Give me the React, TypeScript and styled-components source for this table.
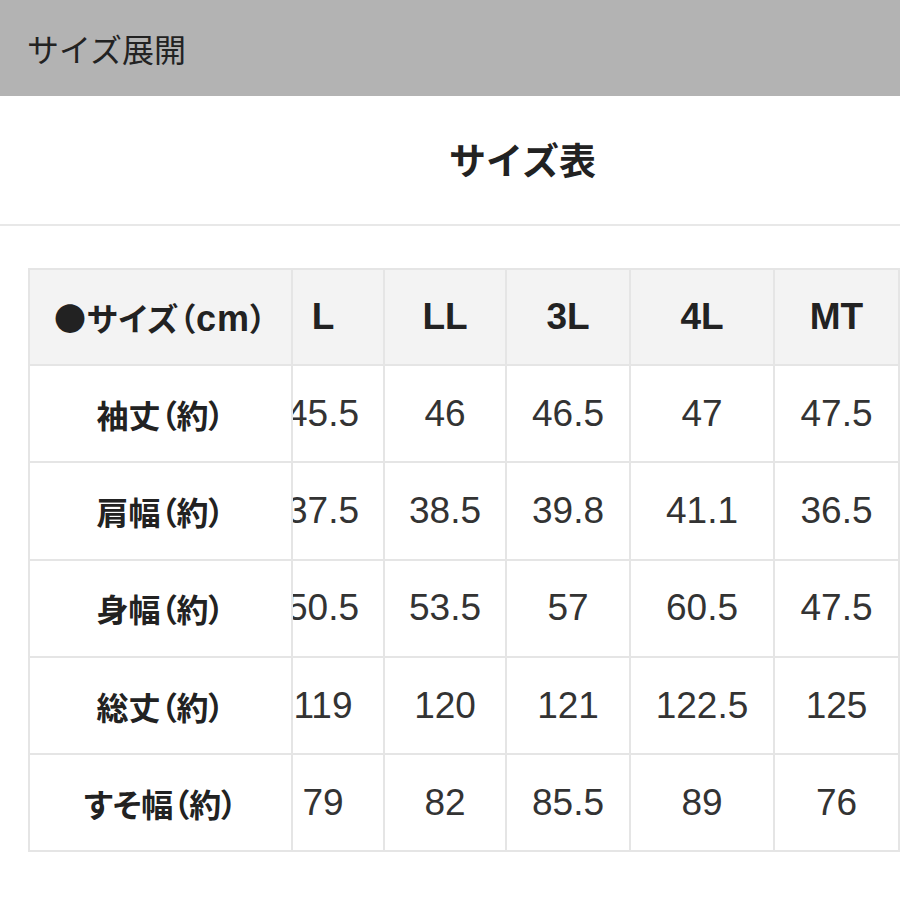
import React, { ReactElement, useLayoutEffect, useRef } from 'react';
import styled, { createGlobalStyle } from 'styled-components';

const GlobalStyle = createGlobalStyle`
  body {
    margin: 0;
    background: #fff;
    font-family: "Noto Sans CJK JP", "Noto Sans", sans-serif;
    color: #222;
  }
`;

const PageBar = styled.div`
  height: 96px;
  background-color: #b3b3b3;
  display: flex;
  align-items: center;
  padding-left: 27px;
  font-size: 32px;
  font-weight: 400;
  color: #222;
`;

const TitleBand = styled.div`
  height: 130px;
  display: flex;
  align-items: center;
  padding: 0 0 3px 449px;
  box-sizing: border-box;
  border-bottom: 2px solid #e8e8e8;
`;

const Title = styled.h2`
  margin: 0;
  font-size: 37px;
  font-weight: 700;
  color: #222;
`;

const TableScroller = styled.div`
  margin: 42px 0 0 28px;
  overflow-x: auto;
  scrollbar-width: none;
  &::-webkit-scrollbar {
    display: none;
  }
`;

const SizeTable = styled.table`
  border-collapse: separate;
  border-spacing: 0;
  table-layout: fixed;
  width: 902px;
`;

const Cell = styled.td<{ $head?: boolean; $top?: boolean }>`
  box-sizing: border-box;
  height: ${(p) => (p.$top ? '98px' : '97.3px')};
  padding: 0;
  text-align: center;
  vertical-align: middle;
  background: ${(p) => (p.$head ? '#f3f3f3' : '#fff')};
  border-right: 2px solid #e5e5e5;
  border-bottom: 2px solid #e5e5e5;
  border-top: ${(p) => (p.$top ? '2px solid #e5e5e5' : 'none')};
  font-family: "Liberation Sans", "Noto Sans CJK JP", sans-serif;
  font-size: 37px;
  font-weight: ${(p) => (p.$head ? 700 : 400)};
  color: ${(p) => (p.$head ? '#222' : '#333')};
  white-space: nowrap;
`;

const LabelCell = styled(Cell)`
  position: sticky;
  left: 0;
  z-index: 1;
  border-left: 2px solid #e5e5e5;
  font-family: "Noto Sans CJK JP", sans-serif;
  font-size: 32px;
  font-weight: 700;
  color: #222;
  font-feature-settings: 'palt';
  letter-spacing: ${(p) => (p.$top ? '1px' : '0')};
`;

const Unit = styled.span`
  font-family: "Liberation Sans", sans-serif;
  font-size: 36px;
`;

const sizes = ['L', 'LL', '3L', '4L', 'MT'];
const widths = [265, 122, 122, 124, 144, 125];

const rows: { label: string; values: string[] }[] = [
  { label: '袖丈（約）', values: ['45.5', '46', '46.5', '47', '47.5'] },
  { label: '肩幅（約）', values: ['37.5', '38.5', '39.8', '41.1', '36.5'] },
  { label: '身幅（約）', values: ['50.5', '53.5', '57', '60.5', '47.5'] },
  { label: '総丈（約）', values: ['119', '120', '121', '122.5', '125'] },
  { label: 'すそ幅（約）', values: ['79', '82', '85.5', '89', '76'] },
];

const App = (): ReactElement => {
  const scrollerRef = useRef<HTMLDivElement>(null);

  // 表は右端までスクロールした状態で表示
  useLayoutEffect(() => {
    const el = scrollerRef.current;
    if (el) el.scrollLeft = el.scrollWidth;
  }, []);

  return (
    <>
      <GlobalStyle />
      <PageBar>サイズ展開</PageBar>
      <TitleBand>
        <Title>サイズ表</Title>
      </TitleBand>
      <TableScroller ref={scrollerRef}>
        <SizeTable>
          <colgroup>
            {widths.map((w, i) => (
              <col key={i} style={{ width: w }} />
            ))}
          </colgroup>
          <thead>
            <tr>
              <LabelCell as="th" $head $top>
                ●サイズ（<Unit>cm</Unit>）
              </LabelCell>
              {sizes.map((s) => (
                <Cell as="th" key={s} $head $top>
                  {s}
                </Cell>
              ))}
            </tr>
          </thead>
          <tbody>
            {rows.map((row) => (
              <tr key={row.label}>
                <LabelCell as="th">{row.label}</LabelCell>
                {row.values.map((v, i) => (
                  <Cell key={i}>{v}</Cell>
                ))}
              </tr>
            ))}
          </tbody>
        </SizeTable>
      </TableScroller>
    </>
  );
};

export default App;
